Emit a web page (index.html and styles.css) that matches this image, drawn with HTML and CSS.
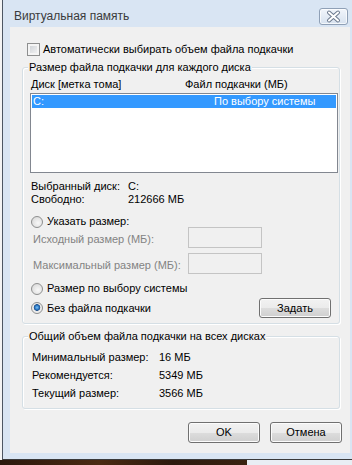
FILE: index.html
```html
<!DOCTYPE html>
<html lang="ru">
<head>
    <meta charset="UTF-8">
    <title>Виртуальная память</title>
    <link rel="stylesheet" href="styles.css">
</head>
<body>
    <div class="screen">
        <div class="desk-left"></div>
        <div class="window">
            <div class="titlebar">
                <span class="title">Виртуальная память</span>
                <div class="close">
                    <svg width="27" height="15" viewBox="0 0 27 15">
                        <path d="M9 3.5 L18 11.5 M18 3.5 L9 11.5" stroke="#6c7a8e" stroke-width="4" stroke-linecap="round"/>
                        <path d="M9 3.5 L18 11.5 M18 3.5 L9 11.5" stroke="#ffffff" stroke-width="2" stroke-linecap="round"/>
                    </svg>
                </div>
            </div>
            <div class="client">
                <div class="check-row">
                    <span class="checkbox"></span>
                    <span>Автоматически выбирать объем файла подкачки</span>
                </div>

                <div class="group group-disks">
                    <div class="group-title">Размер файла подкачки для каждого диска</div>
                    <div class="cols">
                        <span>Диск [метка тома]</span>
                        <span>Файл подкачки (МБ)</span>
                    </div>
                    <div class="listbox">
                        <div class="list-item selected">
                            <span>C:</span>
                            <span>По выбору системы</span>
                        </div>
                    </div>
                    <div class="info">
                        <span>Выбранный диск:</span><span>C:</span>
                        <span>Свободно:</span><span>212666 МБ</span>
                    </div>
                    <div class="radio-row first">
                        <span class="radio"></span>
                        <span>Указать размер:</span>
                    </div>
                    <div class="size-row first">
                        <span class="size-label">Исходный размер (МБ):</span>
                        <span class="textbox"></span>
                    </div>
                    <div class="size-row">
                        <span class="size-label">Максимальный размер (МБ):</span>
                        <span class="textbox"></span>
                    </div>
                    <div class="radio-row second">
                        <span class="radio"></span>
                        <span>Размер по выбору системы</span>
                    </div>
                    <div class="set-row">
                        <div class="radio-row">
                            <span class="radio checked"></span>
                            <span>Без файла подкачки</span>
                        </div>
                        <div class="btn btn-set">Задать</div>
                    </div>
                </div>

                <div class="group group-total">
                    <div class="group-title">Общий объем файла подкачки на всех дисках</div>
                    <div class="totals">
                        <span>Минимальный размер:</span><span>16 МБ</span>
                        <span>Рекомендуется:</span><span>5349 МБ</span>
                        <span>Текущий размер:</span><span>3566 МБ</span>
                    </div>
                </div>

                <div class="buttons">
                    <div class="btn">OK</div>
                    <div class="btn">Отмена</div>
                </div>
            </div>
        </div>
    </div>
    <div class="desk-bottom">
        <div class="desk-dark"></div>
        <div class="desk-light"></div>
    </div>
</body>
</html>
```

FILE: styles.css
```css
* {
    box-sizing: border-box;
}
body {
    margin: 0;
    width: 352px;
    height: 465px;
    overflow: hidden;
    background-color: #2b1a10;
    font-family: "Liberation Sans", Arial, sans-serif;
    font-size: 11px;
    line-height: 13px;
    color: #000;
}
.screen {
    display: flex;
    height: 460px;
}
.desk-left {
    flex: none;
    width: 2px;
    background-color: #f4f4f4;
}
.window {
    flex: none;
    width: 355px;
    padding: 0 7px 6px 7px;
    background-color: #d9e5f3;
    border-left: 1px solid #4d5663;
    border-bottom: 1px solid #3a3a3a;
}
.titlebar {
    height: 27px;
    display: flex;
    justify-content: space-between;
    align-items: flex-start;
}
.title {
    padding: 9px 0 0 4px;
    font-size: 12px;
    line-height: 15px;
    color: #3b3b3b;
}
.close {
    width: 29px;
    height: 17px;
    margin: 8px 2px 0 0;
    border: 1px solid #8fa0b6;
    border-radius: 3px;
    background: linear-gradient(#f1f5fb, #d7e2ef);
    box-shadow: inset 0 0 0 1px rgba(255,255,255,0.7);
}
.close svg {
    display: block;
}
.client {
    height: 426px;
    padding: 16px 8px 0 12px;
    background-color: #f0f0f0;
}
.check-row {
    display: flex;
    align-items: center;
    gap: 3px;
    margin-left: 5px;
    height: 13px;
}
.checkbox {
    flex: none;
    width: 13px;
    height: 13px;
    border: 1px solid #8e8f8f;
    background: linear-gradient(135deg, #c9cdd2, #f7f7f7);
    box-shadow: inset 0 0 0 2px #f4f4f4;
}
.group {
    margin-right: 2px;
    border: 1px solid #d5dfe5;
    border-radius: 3px;
    box-shadow: inset 1px 1px 0 #fff, 1px 1px 0 #fff;
}
.group-disks {
    margin-top: 11px;
    padding-bottom: 5px;
}
.group-total {
    margin-top: 12px;
    padding-bottom: 6px;
}
.group-title {
    width: fit-content;
    margin: -7px 0 0 5px;
    padding: 0 1px;
    background-color: #f0f0f0;
}
.cols {
    display: grid;
    grid-template-columns: 154px auto;
    margin: 4px 0 0 8px;
}
.listbox {
    width: 308px;
    height: 80px;
    margin: 2px 0 0 7px;
    padding: 1px;
    border: 1px solid #828790;
    background-color: #fff;
}
.list-item {
    display: grid;
    grid-template-columns: 181px auto;
    height: 13px;
    padding-left: 1px;
}
.list-item.selected {
    background-color: #3399ff;
    color: #fff;
}
.info {
    display: grid;
    grid-template-columns: 97px auto;
    margin: 7px 0 0 8px;
}
.radio-row {
    display: flex;
    align-items: center;
    gap: 4px;
    height: 13px;
    margin-left: 8px;
}
.radio-row.first {
    margin-top: 9px;
}
.radio-row.second {
    margin-top: 8px;
}
.radio {
    flex: none;
    width: 12px;
    height: 12px;
    border: 1px solid #8e8f8f;
    border-radius: 50%;
    background: radial-gradient(circle at 60% 60%, #f8f8f8 0, #e2e2e2 60%, #cfcfcf 100%);
}
.radio.checked {
    background: radial-gradient(circle at 50% 45%, #7cc3f5 0, #2b78c6 2px, #1d4f8a 3px, #e8e8e8 3.6px, #f6f6f6 100%);
}
.size-row {
    display: grid;
    grid-template-columns: 155px 74px;
    margin: 5px 0 0 10px;
    color: #838383;
}
.size-row.first {
    margin-top: -1px;
}
.size-label {
    margin-top: 6px;
}
.textbox {
    height: 21px;
    border: 1px solid #c4c4c4;
    background-color: #f0f0f0;
}
.set-row {
    display: flex;
    justify-content: space-between;
    align-items: center;
    height: 20px;
    margin: 3px 8px 0 0;
}
.btn {
    width: 72px;
    height: 21px;
    border: 1px solid #707070;
    border-radius: 3px;
    background: linear-gradient(#f2f2f2 0%, #ebebeb 50%, #dddddd 50%, #cfcfcf 100%);
    box-shadow: inset 0 0 0 1px #fcfcfc;
    text-align: center;
    line-height: 19px;
}
.btn-set {
    height: 20px;
    line-height: 18px;
}
.totals {
    display: grid;
    grid-template-columns: 127px auto;
    grid-auto-rows: 18px;
    align-items: center;
    margin: 5px 0 0 9px;
}
.buttons {
    display: flex;
    justify-content: flex-end;
    gap: 10px;
    margin-top: 13px;
}
.desk-bottom {
    display: flex;
    height: 5px;
}
.desk-dark {
    width: 247px;
    background: linear-gradient(90deg, #2a170c, #4a2a12 40%, #2c1a0e 70%, #3a2210);
}
.desk-light {
    flex: 1;
    background-color: #e9eef4;
}
```
